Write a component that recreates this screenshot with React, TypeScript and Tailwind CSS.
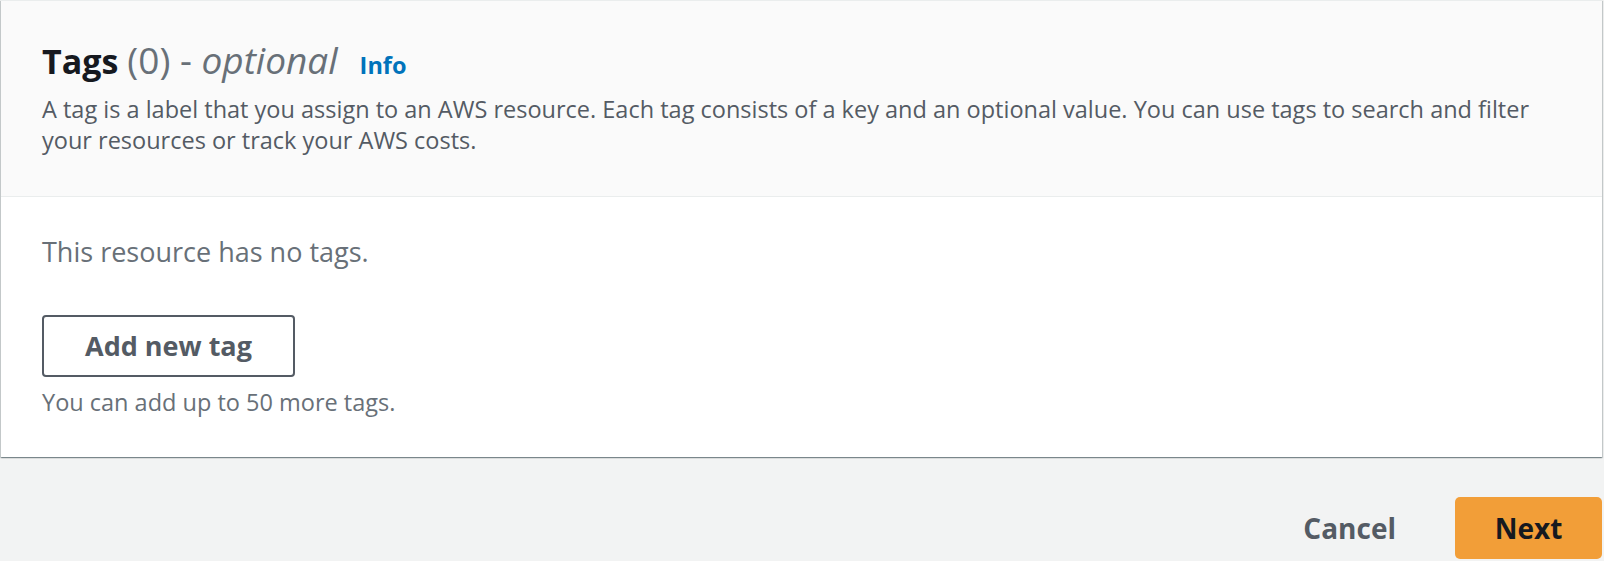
export default function App() {
  return (
    <div className="min-h-screen bg-[#f2f3f3] font-['Open_Sans',sans-serif]">
      <div className="ml-[1px] mr-[2px] border-t border-[#eaeded] bg-white shadow-[0_1px_1px_0_rgba(0,28,36,0.3),1px_1px_1px_0_rgba(0,28,36,0.15),-1px_1px_1px_0_rgba(0,28,36,0.15)]">
        <div className="border-b border-[#eaeded] bg-[#fafafa] px-[41px] pt-[37px] pb-[40px]">
          <h2 className="flex items-baseline leading-[44px]">
            <span className="text-[34px] font-bold text-[#16191f]">Tags</span>
            <span className="ml-[9px] text-[37px] text-[#687078]">
              (0) - <i>optional</i>
            </span>
            <a href="#" className="ml-[22px] text-[23.5px] font-bold text-[#0073bb]">
              Info
            </a>
          </h2>
          <p className="mt-[7px] pr-[30px] text-[23.5px] leading-[31px] text-[#545b64]">
            A tag is a label that you assign to an AWS resource. Each tag consists of a key and an optional value. You can use tags to search and filter your resources or track your AWS costs.
          </p>
        </div>
        <div className="px-[41px] pt-[37px] pb-[40px]">
          <p className="text-[27px] leading-[36px] text-[#687078]">This resource has no tags.</p>
          <button className="mt-[45px] h-[62px] rounded-[4px] border-2 border-[#545b64] bg-white px-[41px] text-[27px] font-bold text-[#545b64]">
            Add new tag
          </button>
          <p className="mt-[10px] text-[23.5px] leading-[30px] text-[#687078]">You can add up to 50 more tags.</p>
        </div>
      </div>
      <div className="mt-[40px] flex justify-end gap-[17px] pr-[2px]">
        <button className="h-[62px] px-[42px] text-[28px] font-bold text-[#545b64]">Cancel</button>
        <button className="h-[62px] w-[147px] rounded-[5px] bg-[#f29e38] text-[28px] font-bold text-[#16191f]">
          Next
        </button>
      </div>
    </div>
  );
}
